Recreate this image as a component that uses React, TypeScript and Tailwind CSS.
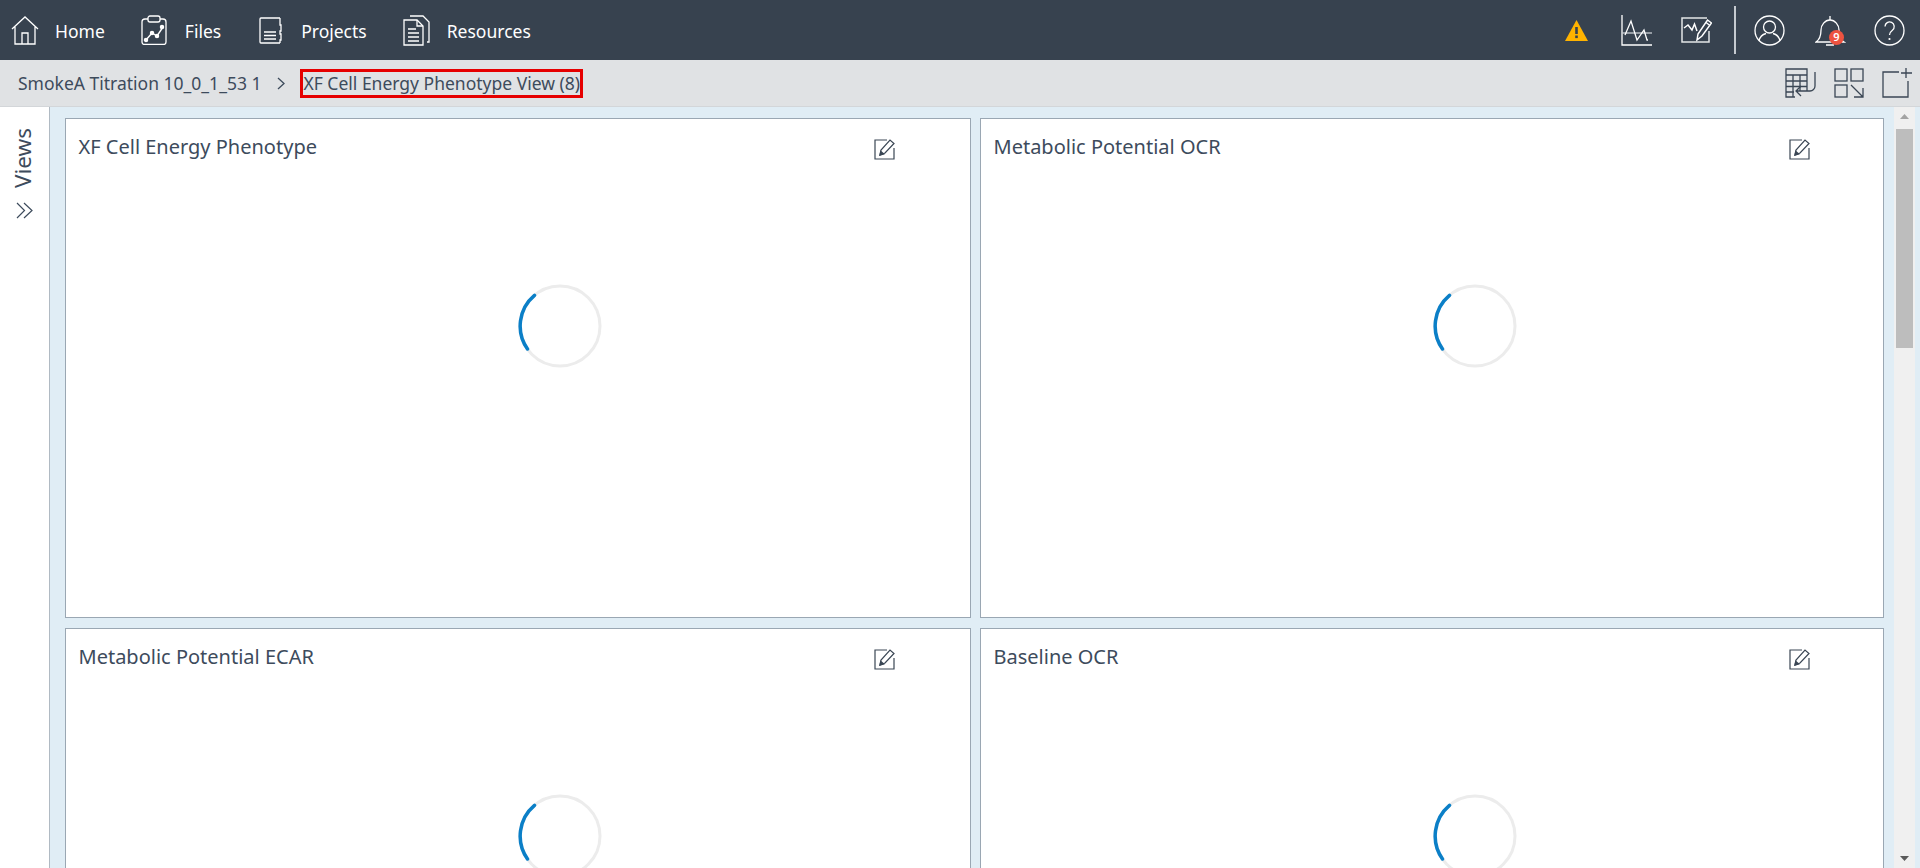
import type { ReactNode } from "react";

const font = { fontFamily: '"Noto Sans", "Open Sans", sans-serif' };

function Icon({ w, h, vb, children, className }: { w: number; h: number; vb?: string; children: ReactNode; className?: string }) {
  return (
    <svg width={w} height={h} viewBox={vb ?? `0 0 ${w} ${h}`} fill="none" stroke="currentColor" strokeWidth="1.3" className={className}>
      {children}
    </svg>
  );
}

const HomeIcon = () => (
  <Icon w={28} h={30}>
    <path d="M1 14 14 2l13 12M4 11v18h20V11M11 29V18h6v11" />
  </Icon>
);

const FilesIcon = () => (
  <Icon w={26} h={30}>
    <path d="M7 4H4a3 3 0 0 0-3 3v20a2.500 2.500 0 0 0 2.500 2.500h19A2.500 2.500 0 0 0 25 27V7a3 3 0 0 0-3-3h-3" />
    <rect x="7" y="1" width="12" height="6" rx="2" />
    <path d="m5 25 6-7 5 3 6-9" strokeWidth="1.4" />
    <circle cx="5" cy="25" r="1.600" fill="currentColor" />
    <circle cx="11" cy="18" r="1.600" fill="currentColor" />
    <circle cx="16" cy="21" r="1.600" fill="currentColor" />
    <circle cx="21" cy="12" r="1.600" fill="currentColor" />
  </Icon>
);

const ProjectsIcon = () => (
  <Icon w={23} h={27}>
    <path d="M21 1H2a1 1 0 0 0-1 1v23a1 1 0 0 0 1 1h19" />
    <path d="M21 1v7h1v6h-1v3h1v6h-1v3" />
    <path d="M5 15h12M5 18.500h12M5 22h12" />
  </Icon>
);

const ResourcesIcon = () => (
  <Icon w={27} h={31}>
    <path d="M1 5h13l6 6v19H1z" />
    <path d="M14 5v6h6M7 1h13l6 6v20h-2" />
    <path d="M5 14h8M5 18h11M5 22h11M5 26h11" />
  </Icon>
);

const WarningIcon = () => (
  <svg width="23" height="21" viewBox="0 0 23 21">
    <path d="M11.500 0 23 21H0z" fill="#ffb300" />
    <rect x="10.200" y="7" width="2.600" height="7" fill="#37424f" />
    <rect x="10.200" y="15.500" width="2.600" height="2.600" fill="#37424f" />
  </svg>
);

const ChartIcon = () => (
  <Icon w={31} h={31}>
    <path d="M1 0v30h30" />
    <path d="M1 18h30" stroke="#c9ced3" />
    <path d="M4 20 10 6l6 19 7-10 3 10h1" />
  </Icon>
);

const EditChartIcon = () => (
  <Icon w={31} h={26}>
    <path d="M26 1H1v24h27V14" stroke="#e4e6e8" strokeWidth="1.500" />
    <path d="m3 11 4-3 4 5 2.500-6L16 14" strokeWidth="1.500" />
    <path d="m16 23 1-6 9.500-14 4 3L21 19z" strokeWidth="1.500" />
    <path d="m25 5.500 4 3" />
  </Icon>
);

const UserIcon = () => (
  <Icon w={31} h={31}>
    <circle cx="15.500" cy="15.500" r="14.500" />
    <circle cx="15.500" cy="12" r="6" />
    <path d="M5 26c1-5 5-7 7-7.500M26 26c-1-5-5-7-7-7.500" />
  </Icon>
);

const BellIcon = () => (
  <div className="relative h-[31px] w-[31px]">
    <Icon w={31} h={31}>
      <path d="M1 27c3-2 5-5 5-12 0-5 4-10 9-10s9 5 9 10c0 7 2 10 5 12z" />
      <path d="M15 1v4M11 30h8" />
    </Icon>
    <span className="absolute left-[14px] top-[15px] flex h-[15px] w-[15px] items-center justify-center rounded-full bg-[#ee5340] text-[11px] font-semibold text-white">
      9
    </span>
  </div>
);

const HelpIcon = () => (
  <Icon w={31} h={31}>
    <circle cx="15.500" cy="15.500" r="14.500" />
    <path d="M11 11.500a4.600 4.600 0 1 1 7.400 3.700c-2 1.500-2.900 2.400-2.900 4.800" />
    <circle cx="15.500" cy="24" r="1.100" fill="currentColor" stroke="none" />
  </Icon>
);

const TableIcon = () => (
  <Icon w={31} h={31}>
    <path d="M10 29H1V1h21v22" />
    <path d="M1 7h21M1 13h21M1 18.500h21M1 24h8M8 7v22M15 7v16" />
    <path d="M30 4v14a5 5 0 0 1-5 5H11m5-5-5 5 5 5" />
  </Icon>
);

const GridIcon = () => (
  <Icon w={30} h={30}>
    <rect x="1" y="1" width="12" height="12" />
    <rect x="17" y="1" width="12" height="12" />
    <rect x="1" y="17" width="12" height="12" />
    <path d="m17 17 12 12M29 20v9h-9" />
  </Icon>
);

const AddIcon = () => (
  <Icon w={30} h={30}>
    <path d="M17 4H1v25h25V13" />
    <path d="M24 0v10M19 5h11" />
  </Icon>
);

const PencilIcon = () => (
  <Icon w={22} h={22}>
    <path d="M13 2H1v19h19V10" strokeWidth="1.200" />
    <path d="m6 17 1-5 9-10 4 3.500L11 15z" strokeWidth="1.200" />
    <path d="m6 17 .8-3.500 2.800 2.500z" fill="currentColor" />
  </Icon>
);

const Spinner = () => (
  <svg width="84" height="84" viewBox="0 0 84 84" fill="none">
    <circle cx="42" cy="42" r="40" stroke="#ececec" strokeWidth="3" />
    <path d="M16.500 11.300A40 40 0 0 0 9.500 65" stroke="#0b7fc7" strokeWidth="3.500" strokeLinecap="round" />
  </svg>
);

function NavItem({ icon, label, iconBox }: { icon: ReactNode; label: string; iconBox: string }) {
  return (
    <div className="flex items-center">
      <div className={iconBox}>{icon}</div>
      <span className="mt-[2px] text-[17.5px] text-white">{label}</span>
    </div>
  );
}

function Card({ title }: { title: string }) {
  return (
    <div className="h-[500px] border border-[#9aa7b3] bg-white">
      <div className="flex items-start pl-[12.5px] pt-[14px]">
        <span className="w-[795px] text-[20px] leading-[27px] text-[#3d4b5c]">{title}</span>
        <div className="mt-[5px] text-[#3a4654]">
          <PencilIcon />
        </div>
      </div>
      <div className="ml-[452px] mt-[124px]">
        <Spinner />
      </div>
    </div>
  );
}

export default function App() {
  return (
    <div style={font} className="flex h-[868px] w-full flex-col overflow-hidden bg-white">
      <header className="flex h-[60px] shrink-0 items-center justify-between bg-[#37424f] text-white">
        <nav className="flex items-center pl-[11px]">
          <NavItem icon={<HomeIcon />} label="Home" iconBox="mr-[16px]" />
          <NavItem icon={<FilesIcon />} label="Files" iconBox="mr-[18px] ml-[36px]" />
          <NavItem icon={<ProjectsIcon />} label="Projects" iconBox="mr-[19px] ml-[38px]" />
          <NavItem icon={<ResourcesIcon />} label="Resources" iconBox="mr-[17px] ml-[36px]" />
        </nav>
        <div className="flex items-center pr-[15px]">
          <WarningIcon />
          <div className="ml-[33px]">
            <ChartIcon />
          </div>
          <div className="ml-[29px]">
            <EditChartIcon />
          </div>
          <div className="ml-[22px] h-[48px] w-[2px] bg-[#c5cad0]" />
          <div className="ml-[18px]">
            <UserIcon />
          </div>
          <div className="ml-[30px]">
            <BellIcon />
          </div>
          <div className="ml-[28px]">
            <HelpIcon />
          </div>
        </div>
      </header>

      <div className="flex h-[47px] shrink-0 items-center justify-between border-b border-[#d3d6d9] bg-[#e0e2e4] text-[#3d4b5c]">
        <div className="flex items-center pl-[18px] text-[17.5px]">
          <span>SmokeA Titration 10_0_1_53 1</span>
          <svg width="8" height="13" viewBox="0 0 8 13" fill="none" stroke="currentColor" strokeWidth="1.300" className="ml-[16px]">
            <path d="m1 1 6 5.500L1 12" />
          </svg>
          <span className="ml-[15px] flex h-[29px] items-center border-[3px] border-[#e60000]">XF Cell Energy Phenotype View (8)</span>
        </div>
        <div className="flex items-center gap-[18px] pr-[8px] text-[#3a4654]">
          <TableIcon />
          <GridIcon />
          <AddIcon />
        </div>
      </div>

      <div className="flex min-h-0 flex-1">
        <aside className="flex w-[50px] shrink-0 flex-col items-center border-r border-[#b0bac3] bg-white pt-[21px] text-[#3d4b5c]">
          <span className="mr-[4px] rotate-180 text-[22.5px] leading-[30px] [writing-mode:vertical-rl]">Views</span>
          <svg width="17" height="17" viewBox="0 0 17 17" fill="none" stroke="currentColor" strokeWidth="1.200" className="mt-[14px]">
            <path d="m1 1 7.500 7.500L1 16M8 1l8 7.500L8 16" />
          </svg>
        </aside>
        <main className="flex min-w-0 flex-1 overflow-hidden bg-[#e0edf5] pt-[11px]">
          <div className="grid h-fit flex-1 grid-cols-[906px_1fr] gap-x-[9px] gap-y-[10px] pl-[15px] pr-[10px]">
            <Card title="XF Cell Energy Phenotype" />
            <Card title="Metabolic Potential OCR" />
            <Card title="Metabolic Potential ECAR" />
            <Card title="Baseline OCR" />
          </div>
          <div className="-mt-[11px] mr-[5px] flex w-[21px] shrink-0 flex-col items-center bg-[#f0f0f0]">
            <svg width="9" height="5" viewBox="0 0 9 5" className="mt-[7px]">
              <path d="M4.500 0 9 5H0z" fill="#a3a3a3" />
            </svg>
            <div className="mt-[10px] h-[219px] w-[17px] bg-[#bdbdbd]" />
            <svg width="9" height="5" viewBox="0 0 9 5" className="mt-auto mb-[7px]">
              <path d="M0 0h9L4.500 5z" fill="#5a5a5a" />
            </svg>
          </div>
        </main>
      </div>
    </div>
  );
}
